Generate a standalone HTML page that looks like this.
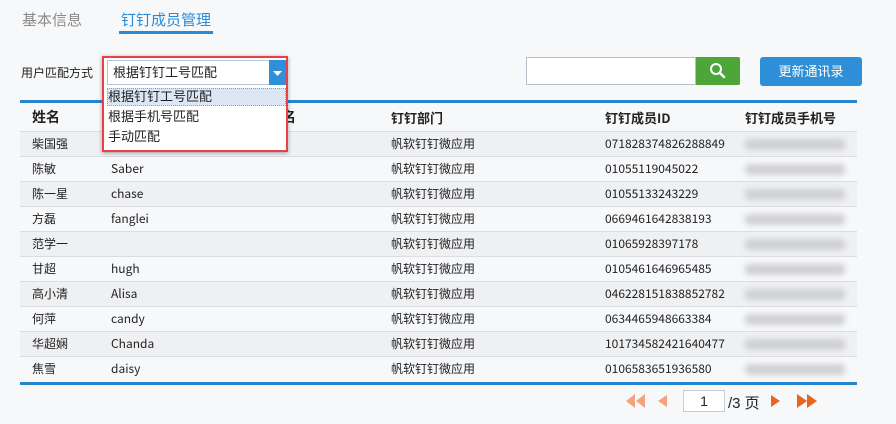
<!DOCTYPE html>
<html><head><meta charset="utf-8"><style>
*{margin:0;padding:0;box-sizing:border-box}
body{width:896px;height:424px;background:#f7f8fa;font-family:"Liberation Sans","Noto Sans CJK SC",sans-serif;font-size:12px;color:#222;position:relative;overflow:hidden}
.a{position:absolute}
.tab{font-size:15px;top:9px}
.row{position:absolute;left:20px;width:837px;height:25px;border-bottom:1px solid #dcdde0}
.row span{position:absolute;top:0;line-height:24px;height:24px;font-size:12px;font-family:"Noto Sans CJK SC","Liberation Sans",sans-serif}
.blur{position:absolute;left:725px;top:7px;width:100px;height:11px;background:#cfd0d3;filter:blur(3px);border-radius:4px}
</style></head><body>
<div class="a tab" style="left:22px;color:#8a8a8a">基本信息</div>
<div class="a tab" style="left:121px;color:#2b8bd6">钉钉成员管理</div>
<div class="a" style="left:119px;top:31px;width:94px;height:3px;background:#2b8bd6"></div>

<div class="a" style="left:21px;top:64px;font-size:12px">用户匹配方式</div>

<div class="a" style="left:526px;top:57px;width:170px;height:28px;background:#fff;border:1px solid #b8bdc8"></div>
<div class="a" style="left:696px;top:57px;width:44px;height:28px;background:#4da63a;border-radius:0 2px 2px 0">
<svg width="44" height="28"><circle cx="20" cy="12" r="5" fill="none" stroke="#fff" stroke-width="2"/><line x1="24" y1="16" x2="28" y2="20" stroke="#fff" stroke-width="2.4" stroke-linecap="round"/></svg></div>
<div class="a" style="left:760px;top:57px;width:102px;height:29px;background:#2e8fd8;border-radius:3px;color:#fff;font-size:13px;text-align:center;line-height:29px">更新通讯录</div>

<div class="a" style="left:20px;top:100px;width:837px;height:3px;background:#2486cf"></div>
<div class="row" style="top:103px;height:29px;border-bottom:1px solid #dcdde0">
<span style="left:12px;line-height:29px;height:29px;font-weight:bold;font-size:14px">姓名</span>
<span style="left:262px;line-height:29px;height:29px;font-weight:bold;font-size:14px">名</span>
<span style="left:371px;line-height:29px;height:29px;font-weight:bold;font-size:13px">钉钉部门</span>
<span style="left:585px;line-height:29px;height:29px;font-weight:bold;font-size:13px">钉钉成员ID</span>
<span style="left:725px;line-height:29px;height:29px;font-weight:bold;font-size:13px">钉钉成员手机号</span>
</div>

<div class="row" style="top:132px;background:#eff0f2"><span style="left:12px">柴国强</span><span style="left:371px">帆软钉钉微应用</span><span style="left:585px">071828374826288849</span><div class="blur"></div></div>
<div class="row" style="top:157px"><span style="left:12px">陈敏</span><span style="left:91px">Saber</span><span style="left:371px">帆软钉钉微应用</span><span style="left:585px">01055119045022</span><div class="blur"></div></div>
<div class="row" style="top:182px;background:#eff0f2"><span style="left:12px">陈一星</span><span style="left:91px">chase</span><span style="left:371px">帆软钉钉微应用</span><span style="left:585px">01055133243229</span><div class="blur"></div></div>
<div class="row" style="top:207px"><span style="left:12px">方磊</span><span style="left:91px">fanglei</span><span style="left:371px">帆软钉钉微应用</span><span style="left:585px">0669461642838193</span><div class="blur"></div></div>
<div class="row" style="top:232px;background:#eff0f2"><span style="left:12px">范学一</span><span style="left:371px">帆软钉钉微应用</span><span style="left:585px">01065928397178</span><div class="blur"></div></div>
<div class="row" style="top:257px"><span style="left:12px">甘超</span><span style="left:91px">hugh</span><span style="left:371px">帆软钉钉微应用</span><span style="left:585px">0105461646965485</span><div class="blur"></div></div>
<div class="row" style="top:282px;background:#eff0f2"><span style="left:12px">高小清</span><span style="left:91px">Alisa</span><span style="left:371px">帆软钉钉微应用</span><span style="left:585px">046228151838852782</span><div class="blur"></div></div>
<div class="row" style="top:307px"><span style="left:12px">何萍</span><span style="left:91px">candy</span><span style="left:371px">帆软钉钉微应用</span><span style="left:585px">0634465948663384</span><div class="blur"></div></div>
<div class="row" style="top:332px;background:#eff0f2"><span style="left:12px">华超娴</span><span style="left:91px">Chanda</span><span style="left:371px">帆软钉钉微应用</span><span style="left:585px">101734582421640477</span><div class="blur"></div></div>
<div class="row" style="top:357px;border-bottom:none"><span style="left:12px">焦雪</span><span style="left:91px">daisy</span><span style="left:371px">帆软钉钉微应用</span><span style="left:585px">0106583651936580</span><div class="blur"></div></div>
<div class="a" style="left:20px;top:382px;width:837px;height:3px;background:#2486cf"></div>

<svg class="a" style="left:620px;top:390px" width="210" height="24">
<polygon points="15,4 15,18 6,11" fill="#f3a27e"/><polygon points="25,4 25,18 16,11" fill="#f3a27e"/>
<polygon points="47,5 47,17 38,11" fill="#f3a27e"/>
<polygon points="151,5 151,17 160,11" fill="#e8641f"/>
<polygon points="177,4 177,18 187,11" fill="#e8641f"/><polygon points="187,4 187,18 197,11" fill="#e8641f"/>
</svg>
<div class="a" style="left:683px;top:390px;width:42px;height:22px;background:#fff;border:1px solid #c8ccd2;text-align:center;line-height:20px;font-size:14px">1</div>
<div class="a" style="left:728px;top:392px;font-size:15px">/3 页</div>

<div class="a" style="left:102px;top:56px;width:186px;height:96px;border:2px solid #e8414a;box-shadow:0 1px 4px rgba(0,0,0,.35);background:#fff">
<div class="a" style="left:3px;top:2px;width:163px;height:25px;border:1px solid #b9c2d0;background:#fff;font-size:13px;line-height:23px;padding-left:5px">根据钉钉工号匹配</div>
<div class="a" style="left:165px;top:2px;width:17px;height:25px;background:#2f8fd8"><svg width="17" height="25"><polygon points="4,11 13,11 8.5,16" fill="#fff"/></svg></div>
<div class="a" style="left:3px;top:30px;width:179px;height:18px;background:#dde6f4;border:1px dotted #8aa0c8;font-size:13px;line-height:16px">根据钉钉工号匹配</div>
<div class="a" style="left:4px;top:50px;font-size:13px;line-height:18px">根据手机号匹配</div>
<div class="a" style="left:4px;top:70px;font-size:13px;line-height:18px">手动匹配</div>
</div>
</body></html>
